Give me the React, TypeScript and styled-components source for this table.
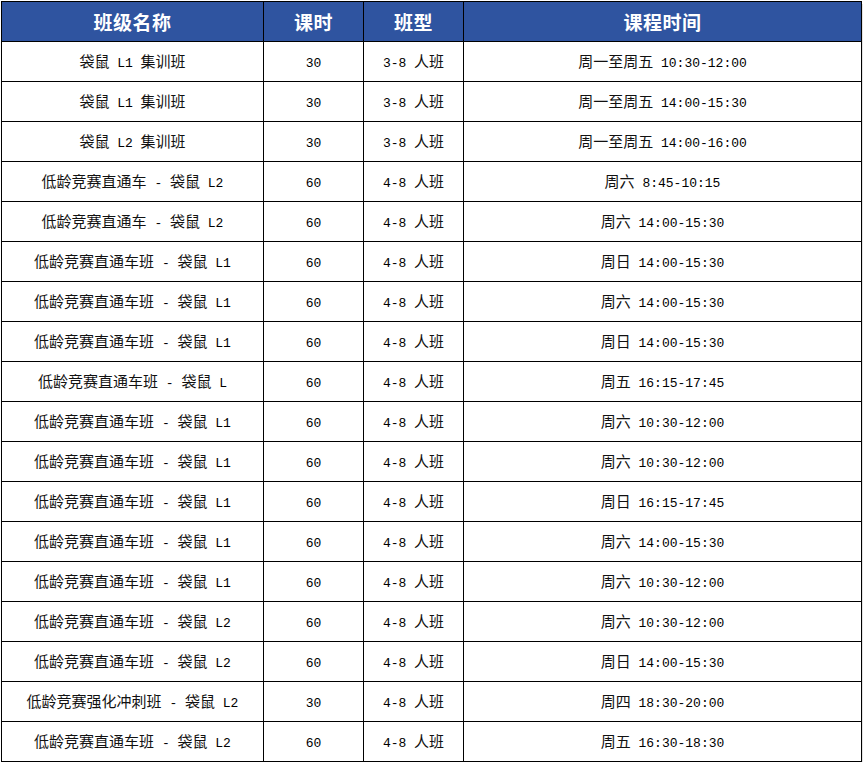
import React from "react";
import styled, { createGlobalStyle } from "styled-components";

const Global = createGlobalStyle`
  html, body {
    margin: 0;
    padding: 0;
    background: #ffffff;
  }
  body {
    font-family: "Noto Sans CJK SC", "Liberation Sans", sans-serif;
  }
`;

const Page = styled.div`
  padding: 1px 0 0 1px;
`;

const Grid = styled.div`
  display: grid;
  grid-template-columns: 261px 99px 99px 397px;
  grid-auto-rows: 39px;
  gap: 1px;
  padding: 1px;
  width: max-content;
  background: #000000;
  box-shadow: 2px 2px 0 -1px #e3e3e3;
`;

const HeadCell = styled.div`
  display: flex;
  align-items: center;
  justify-content: center;
  background: #2f54a0;
  color: #ffffff;
  font-family: "Noto Sans CJK SC", sans-serif;
  font-weight: 700;
  font-size: 19px;
  letter-spacing: 0.5px;
`;

const Cell = styled.div`
  display: flex;
  align-items: center;
  justify-content: center;
  background: #ffffff;
  color: #111111;
  font-family: "Noto Sans CJK SC", sans-serif;
  font-size: 15px;
`;

const Line = styled.span`
  display: inline-block;
  white-space: pre;
  line-height: 20px;
  padding-top: 2px;
`;

const Latin = styled.span`
  font-family: "Liberation Mono", monospace;
  font-size: 13px;
  color: #000000;
`;

const Han = styled.span`
  font-family: "Noto Sans CJK SC", sans-serif;
  font-size: 15px;
`;

const MixedText: React.FC<{ text: string }> = ({ text }) => {
  const parts = text.split(/([\u4e00-\u9fff]+)/).filter((p) => p.length > 0);
  return (
    <Line>
      {parts.map((p, i) =>
        /[\u4e00-\u9fff]/.test(p) ? <Han key={i}>{p}</Han> : <Latin key={i}>{p}</Latin>
      )}
    </Line>
  );
};

const headers = ["班级名称", "课时", "班型", "课程时间"];

const N1 = "低龄竞赛直通车班 - 袋鼠 L1";
const N2 = "低龄竞赛直通车班 - 袋鼠 L2";

const rows: [string, string, string, string][] = [
  ["袋鼠 L1 集训班", "30", "3-8 人班", "周一至周五 10:30-12:00"],
  ["袋鼠 L1 集训班", "30", "3-8 人班", "周一至周五 14:00-15:30"],
  ["袋鼠 L2 集训班", "30", "3-8 人班", "周一至周五 14:00-16:00"],
  ["低龄竞赛直通车 - 袋鼠 L2", "60", "4-8 人班", "周六 8:45-10:15"],
  ["低龄竞赛直通车 - 袋鼠 L2", "60", "4-8 人班", "周六 14:00-15:30"],
  [N1, "60", "4-8 人班", "周日 14:00-15:30"],
  [N1, "60", "4-8 人班", "周六 14:00-15:30"],
  [N1, "60", "4-8 人班", "周日 14:00-15:30"],
  ["低龄竞赛直通车班 - 袋鼠 L", "60", "4-8 人班", "周五 16:15-17:45"],
  [N1, "60", "4-8 人班", "周六 10:30-12:00"],
  [N1, "60", "4-8 人班", "周六 10:30-12:00"],
  [N1, "60", "4-8 人班", "周日 16:15-17:45"],
  [N1, "60", "4-8 人班", "周六 14:00-15:30"],
  [N1, "60", "4-8 人班", "周六 10:30-12:00"],
  [N2, "60", "4-8 人班", "周六 10:30-12:00"],
  [N2, "60", "4-8 人班", "周日 14:00-15:30"],
  ["低龄竞赛强化冲刺班 - 袋鼠 L2", "30", "4-8 人班", "周四 18:30-20:00"],
  [N2, "60", "4-8 人班", "周五 16:30-18:30"],
];

export default function App() {
  return (
    <Page>
      <Global />
      <Grid>
        {headers.map((h) => (
          <HeadCell key={h}>{h}</HeadCell>
        ))}
        {rows.map((r, ri) =>
          r.map((c, ci) => (
            <Cell key={`${ri}-${ci}`}>
              <MixedText text={c} />
            </Cell>
          ))
        )}
      </Grid>
    </Page>
  );
}
